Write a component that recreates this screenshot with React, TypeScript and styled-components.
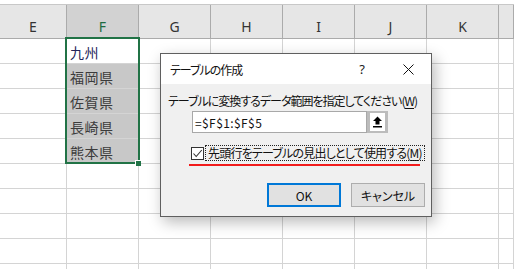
import styled, { createGlobalStyle } from "styled-components";

const GlobalStyle = createGlobalStyle`
  html, body {
    margin: 0;
    padding: 0;
    background: #ffffff;
  }
  body {
    font-family: "Noto Sans CJK JP", "Noto Sans", sans-serif;
  }
`;

const COLS = ["E", "F", "G", "H", "I", "J", "K", ""];
const GRID = "67px repeat(6, 72px) 1fr";

const rows: string[] = ["九州", "福岡県", "佐賀県", "長崎県", "熊本県", "", "", "", "", ""];

const Sheet = styled.div`
  position: relative;
  width: 514px;
  height: 269px;
  overflow: hidden;
  background: #ffffff;
`;

const TopStrip = styled.div`
  height: 4px;
  background: #ffffff;
`;

const HeaderRow = styled.div`
  display: grid;
  grid-template-columns: ${GRID};
  height: 35px;
  box-sizing: border-box;
  border-top: 1px solid #c8c8c8;
  border-bottom: 1px solid #ababab;
  background: #e6e6e6;
`;

const HeaderCell = styled.div<{ $active?: boolean }>`
  display: flex;
  align-items: flex-end;
  justify-content: center;
  padding-bottom: 2px;
  box-sizing: border-box;
  border-right: 1px solid #ababab;
  background: ${(p) => (p.$active ? "#d2d2d2" : "#e6e6e6")};
  color: ${(p) => (p.$active ? "#1d6b40" : "#333333")};
  font-family: "Noto Sans", "Liberation Sans", sans-serif;
  font-size: 14px;
  line-height: 18px;
`;

const Row = styled.div`
  display: grid;
  grid-template-columns: ${GRID};
  height: 25px;
`;

const Cell = styled.div<{ $selected?: boolean; $ink?: string }>`
  display: flex;
  align-items: center;
  padding: 2px 0 0 3px;
  box-sizing: border-box;
  border-right: 1px solid #d4d4d4;
  border-bottom: 1px solid #d4d4d4;
  background: ${(p) => (p.$selected ? "#c8c8c8" : "#ffffff")};
  color: ${(p) => p.$ink || "#3c3c3c"};
  font-size: 14px;
  letter-spacing: 0.5px;
  white-space: nowrap;
`;

const Selection = styled.div`
  position: absolute;
  left: 65px;
  top: 37px;
  width: 75px;
  height: 127px;
  box-sizing: border-box;
  border: 2px solid #217346;
  pointer-events: none;
`;

const FillHandle = styled.div`
  position: absolute;
  left: 135px;
  top: 160px;
  width: 6px;
  height: 6px;
  box-sizing: border-box;
  background: #217346;
  border-left: 1px solid #ffffff;
  border-top: 1px solid #ffffff;
`;

const Dialog = styled.div`
  position: absolute;
  left: 160px;
  top: 53px;
  width: 272px;
  height: 164px;
  box-sizing: border-box;
  border: 1px solid #5f5f5f;
  display: flex;
  flex-direction: column;
  box-shadow: 3px 5px 14px rgba(0, 0, 0, 0.28);
  font-size: 12px;
  letter-spacing: -1px;
  font-feature-settings: "palt";
  color: #111111;
`;

const TitleBar = styled.div`
  display: flex;
  align-items: center;
  height: 30px;
  background: #ffffff;
  padding-left: 9px;
`;

const Title = styled.div`
  flex: 1;
  font-size: 12px;
`;

const TitleButton = styled.div`
  width: 46px;
  height: 30px;
  display: flex;
  align-items: center;
  justify-content: center;
  font-family: "Noto Sans", sans-serif;
  font-size: 13px;
  letter-spacing: 0;
  color: #222222;
`;

const Body = styled.div`
  flex: 1;
  display: flex;
  flex-direction: column;
  background: #f0f0f0;
  padding: 9px 6px 9px 7px;
`;

const Label = styled.div`
  line-height: 16px;
  white-space: nowrap;
`;

const Key = styled.span`
  text-decoration: underline;
  text-underline-offset: 2px;
`;

const InputRow = styled.div`
  display: flex;
  margin: 2px 0 0 24px;
  height: 22px;
`;

const RangeInput = styled.div`
  width: 175px;
  box-sizing: border-box;
  border: 1px solid #a8a8a8;
  background: #ffffff;
  display: flex;
  align-items: center;
  padding-left: 2px;
  font-size: 12px;
  font-feature-settings: normal;
  letter-spacing: 0.4px;
`;

const RangeButton = styled.div`
  width: 21px;
  box-sizing: border-box;
  border: 3px solid #bcbcbc;
  border-top-width: 2px;
  border-bottom-width: 2px;
  background: #ffffff;
  display: flex;
  align-items: center;
  justify-content: center;
`;

const CheckRow = styled.div`
  display: flex;
  align-items: center;
  margin: 13px 0 0 23px;
  height: 14px;
`;

const CheckBox = styled.div`
  width: 13px;
  height: 13px;
  box-sizing: border-box;
  border: 1px solid #333333;
  background: #ffffff;
  display: flex;
  align-items: center;
  justify-content: center;
`;

const CheckLabel = styled.div`
  margin-left: 2px;
  padding: 0 2px;
  height: 14px;
  line-height: 14px;
  letter-spacing: -0.8px;
  outline: 1px dotted #222222;
  white-space: nowrap;
`;

const RedMark = styled.div`
  margin: 4px 0 0 21px;
  width: 231px;
  height: 2px;
  background: #f21b1b;
`;

const ButtonRow = styled.div`
  margin-top: auto;
  display: flex;
  justify-content: flex-end;
  gap: 10px;
`;

const DialogButton = styled.div<{ $default?: boolean }>`
  width: 74px;
  height: 24px;
  box-sizing: border-box;
  border: ${(p) => (p.$default ? "2px solid #0078d7" : "1px solid #adadad")};
  background: #e1e1e1;
  display: flex;
  align-items: center;
  justify-content: center;
  font-size: 12px;
  letter-spacing: 0;
`;

export default function App() {
  return (
    <>
      <GlobalStyle />
      <Sheet>
        <TopStrip />
        <HeaderRow>
          {COLS.map((c, i) => (
            <HeaderCell key={i} $active={c === "F"}>
              {c}
            </HeaderCell>
          ))}
        </HeaderRow>
        {rows.map((text, r) => (
          <Row key={r}>
            {COLS.map((c, i) => (
              <Cell
                key={i}
                $selected={c === "F" && r >= 1 && r <= 4}
                $ink={r === 0 ? "#24245a" : undefined}
              >
                {c === "F" ? text : ""}
              </Cell>
            ))}
          </Row>
        ))}
        <Selection />
        <FillHandle />

        <Dialog>
          <TitleBar>
            <Title>テーブルの作成</Title>
            <TitleButton>?</TitleButton>
            <TitleButton>
              <svg width="11" height="11" viewBox="0 0 11 11">
                <path d="M0.5 0.5 L10.5 10.5 M10.5 0.5 L0.5 10.5" stroke="#111" strokeWidth="1" />
              </svg>
            </TitleButton>
          </TitleBar>
          <Body>
            <Label>
              テーブルに変換するデータ範囲を指定してください(<Key>W</Key>)
            </Label>
            <InputRow>
              <RangeInput>=$F$1:$F$5</RangeInput>
              <RangeButton>
                <svg width="11" height="12" viewBox="0 0 11 12">
                  <polygon points="5.5,0.5 10,5 7.5,5 7.5,8.5 3.5,8.5 3.5,5 1,5" fill="#000" />
                  <rect x="1" y="10" width="9" height="1.5" fill="#000" />
                </svg>
              </RangeButton>
            </InputRow>
            <CheckRow>
              <CheckBox>
                <svg width="11" height="11" viewBox="0 0 11 11">
                  <polyline points="1.5,5.5 4.2,8.5 9.8,2" fill="none" stroke="#333" strokeWidth="1.1" />
                </svg>
              </CheckBox>
              <CheckLabel>
                先頭行をテーブルの見出しとして使用する(<Key>M</Key>)
              </CheckLabel>
            </CheckRow>
            <RedMark />
            <ButtonRow>
              <DialogButton $default>OK</DialogButton>
              <DialogButton>キャンセル</DialogButton>
            </ButtonRow>
          </Body>
        </Dialog>
      </Sheet>
    </>
  );
}
